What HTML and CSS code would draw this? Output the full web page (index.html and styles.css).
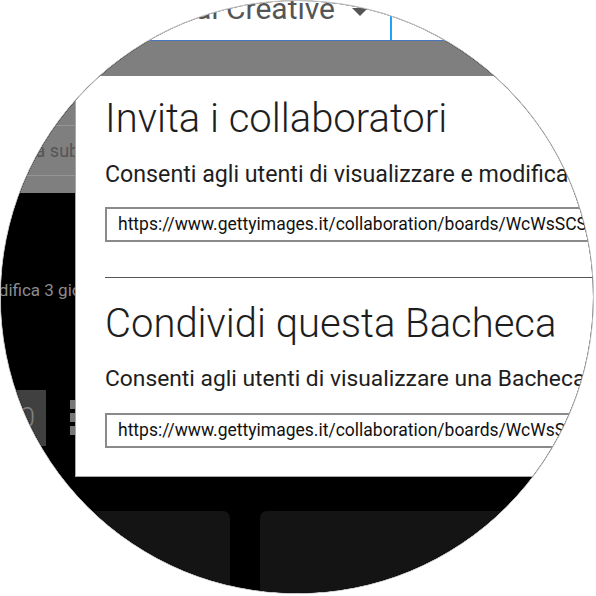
FILE: index.html
```html
<!DOCTYPE html>
<html lang="it">
<head>
<meta charset="utf-8">
<title>Invita i collaboratori</title>
<link rel="stylesheet" href="styles.css">
</head>
<body>
<div class="lens">
  <div class="page">
    <header class="topbar">
      <div class="scope">
        <span class="scope-label">Editorial Creative</span>
        <span class="caret"></span>
      </div>
      <div class="cursorline"></div>
    </header>
    <div class="band"></div>
    <main class="main">
      <div class="filter">
        <div class="filter-row"></div>
        <div class="filter-row"><span class="filter-text">Cerca subito</span></div>
        <div class="filter-end"></div>
      </div>
      <p class="meta">Ultima modifica 3 giorni fa</p>
      <div class="tools">
        <div class="count">0</div>
        <div class="list-icon"><span></span><span></span><span></span></div>
      </div>
      <div class="cards">
        <div class="card card-a"></div>
        <div class="card card-b"></div>
      </div>
    </main>
  </div>
  <section class="dialog">
    <h2 class="dialog-title">Invita i collaboratori</h2>
    <p class="dialog-text text-first">Consenti agli utenti di visualizzare e modificare questa Bacheca</p>
    <div class="url-box">https://www.gettyimages.it/collaboration/boards/WcWsSCS4d0yJ0l2wFvGr3A</div>
    <hr class="divider">
    <h2 class="dialog-title title-second">Condividi questa Bacheca</h2>
    <p class="dialog-text">Consenti agli utenti di visualizzare una Bacheca senza modificarla</p>
    <div class="url-box url-second">https://www.gettyimages.it/collaboration/boards/WcWsSCS4d0yJ0l2wFvGr3A</div>
  </section>
</div>
</body>
</html>
```
FILE: styles.css
```css
* { box-sizing: border-box; margin: 0; padding: 0; }
html, body { width: 596px; height: 596px; overflow: hidden; background: #ffffff; }
body { font-family: Roboto, "Noto Sans", Arial, sans-serif; }

.lens {
  position: relative;
  width: 594px;
  height: 594px;
  border: 1px solid #c6c6c6;
  border-radius: 50%;
  overflow: hidden;
  background: #000;
}
.page { width: 100%; height: 100%; display: flex; flex-direction: column; }

.topbar {
  height: 40px;
  flex: none;
  background: #fff;
  border-bottom: 1px solid #4a76c0;
  display: flex;
  align-items: flex-start;
}
.scope {
  width: 367px;
  flex: none;
  display: flex;
  justify-content: flex-end;
  align-items: flex-start;
  gap: 17px;
  white-space: nowrap;
}
.scope-label {
  font-size: 30px;
  line-height: 30px;
  color: #555;
  margin-top: -7px;
}
.caret {
  margin-top: 7px;
  width: 0; height: 0;
  border-left: 8px solid transparent;
  border-right: 8px solid transparent;
  border-top: 8px solid #555;
}
.cursorline {
  margin-left: 22px;
  width: 2px;
  height: 39px;
  background: #1fa3f5;
}

.band { height: 35px; flex: none; background: #7f7f7f; }

.main { flex: 1; background: #000; display: flex; flex-direction: column; }

.filter { background: #7f7f7f; height: 117px; flex: none; display: flex; flex-direction: column; }
.filter-row {
  height: 50px;
  border-bottom: 1px solid #959595;
  display: flex;
  align-items: center;
}
.filter-text {
  font-size: 18px;
  color: #555;
  white-space: nowrap;
  margin-left: -2px;
}
.filter-end { flex: 1; }

.meta {
  margin-top: 87px;
  font-size: 17px;
  line-height: 20px;
  color: #8c8c8c;
  white-space: nowrap;
  text-indent: -80px;
}

.tools { margin-top: 90px; height: 56px; display: flex; align-items: flex-start; gap: 24px; }
.count {
  width: 45px;
  height: 56px;
  background: #404040;
  color: #808080;
  font-size: 28px;
  font-weight: 300;
  text-align: right;
  padding-right: 11px;
  line-height: 56px;
}
.list-icon { margin-top: 10px; display: flex; flex-direction: column; gap: 4px; }
.list-icon span { display: block; width: 10px; height: 9px; background: #777; }

.cards { margin-top: 65px; display: flex; gap: 30px; padding-left: 30px; }
.card { height: 120px; background: #141414; border-radius: 7px; }
.card-a { width: 199px; }
.card-b { width: 300px; }

.dialog {
  position: absolute;
  left: 74px;
  top: 75px;
  width: 560px;
  height: 401px;
  background: #fff;
  border-left: 1px solid #a8a8a8;
  border-bottom: 1px solid #a8a8a8;
  padding: 19px 0 0 29px;
  color: #1e1e1e;
  white-space: nowrap;
}
.dialog-title { font-size: 40px; font-weight: 300; line-height: 48px; }
.title-second { margin-top: 22px; }
.dialog-text { margin-top: 19px; font-size: 22.8px; line-height: 24px; }
.text-first { font-size: 23.2px; }
.url-box {
  margin-top: 21px;
  height: 35px;
  border: 2px solid #8a8a8a;
  padding-left: 11px;
  font-size: 17.5px;
  line-height: 31px;
  color: #111;
  overflow: hidden;
}
.url-second { margin-top: 22px; }
.divider { margin-top: 35px; border: 0; border-top: 1px solid #555; }
```
